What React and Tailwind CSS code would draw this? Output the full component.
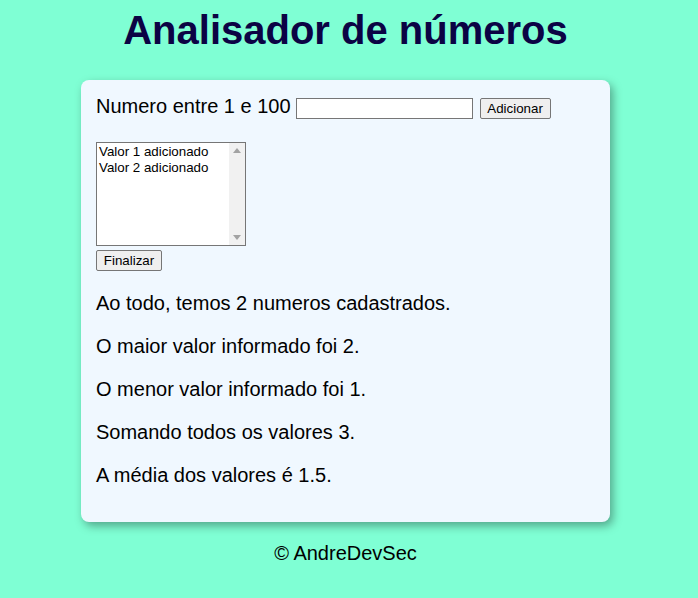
import React from 'react';

const valores = [1, 2];

const Analisador = () => {
  const total = valores.length;
  const maior = Math.max(...valores);
  const menor = Math.min(...valores);
  const soma = valores.reduce((a, b) => a + b, 0);
  const media = soma / total;

  return (
    <div className="min-h-[598px] bg-[#7fffd4] pr-[7px] font-['Liberation_Sans',Arial,sans-serif] text-black">
      <h1 className="pt-[7px] text-center text-[40px] font-bold leading-[46px] text-[#0b0344]">
        Analisador de números
      </h1>

      <section className="mx-auto mt-[27px] w-[529px] rounded-lg bg-[#f0f8ff] px-[15px] pb-[15px] pt-[15px] shadow-[3px_4px_10px_rgba(0,0,0,0.35)]">
        {/* entrada */}
        <div className="flex h-[23px] items-center text-[20px] leading-[23px]">
          <span>Numero entre 1 e 100</span>
          <input
            type="number"
            className="ml-[5px] mt-[4px] h-[21px] w-[177px] border border-[#767676] bg-white px-[2px] text-[13px] outline-none [appearance:textfield] [&::-webkit-inner-spin-button]:appearance-none"
          />
          <button className="ml-[7px] mt-[4px] h-[21px] w-[71px] rounded-[2px] border border-[#767676] bg-[#efefef] text-[13.33px] leading-none">
            Adicionar
          </button>
        </div>

        {/* lista de valores */}
        <div className="mt-[24px] flex h-[104px] w-[150px] border border-[#767676] bg-white">
          <div className="flex-1 pl-[2px] pt-[1px] text-[13.33px] leading-[16px]">
            {valores.map((v) => (
              <div key={v}>Valor {v} adicionado</div>
            ))}
          </div>
          <div className="flex w-[16px] flex-col items-center justify-between bg-[#f1f1f1] py-[5px]">
            <svg width="8" height="5" viewBox="0 0 8 5">
              <path d="M0 5 L4 0 L8 5 Z" fill="#a3a3a3" />
            </svg>
            <svg width="8" height="5" viewBox="0 0 8 5">
              <path d="M0 0 L4 5 L8 0 Z" fill="#a3a3a3" />
            </svg>
          </div>
        </div>
        <button className="mt-[4px] h-[21px] w-[66px] rounded-[2px] border border-[#767676] bg-[#efefef] text-[13.33px] leading-none">
          Finalizar
        </button>

        {/* resultado */}
        <div className="text-[20px] leading-[23px]">
          <p className="my-[20px]">Ao todo, temos {total} numeros cadastrados.</p>
          <p className="my-[20px]">O maior valor informado foi {maior}.</p>
          <p className="my-[20px]">O menor valor informado foi {menor}.</p>
          <p className="my-[20px]">Somando todos os valores {soma}.</p>
          <p className="mt-[20px] mb-[20px]">A média dos valores é {media}.</p>
        </div>
      </section>

      <footer className="mt-[20px] text-center text-[20px] leading-[23px]">
        &copy; AndreDevSec
      </footer>
    </div>
  );
};

export default function App() {
  return <Analisador />;
}
